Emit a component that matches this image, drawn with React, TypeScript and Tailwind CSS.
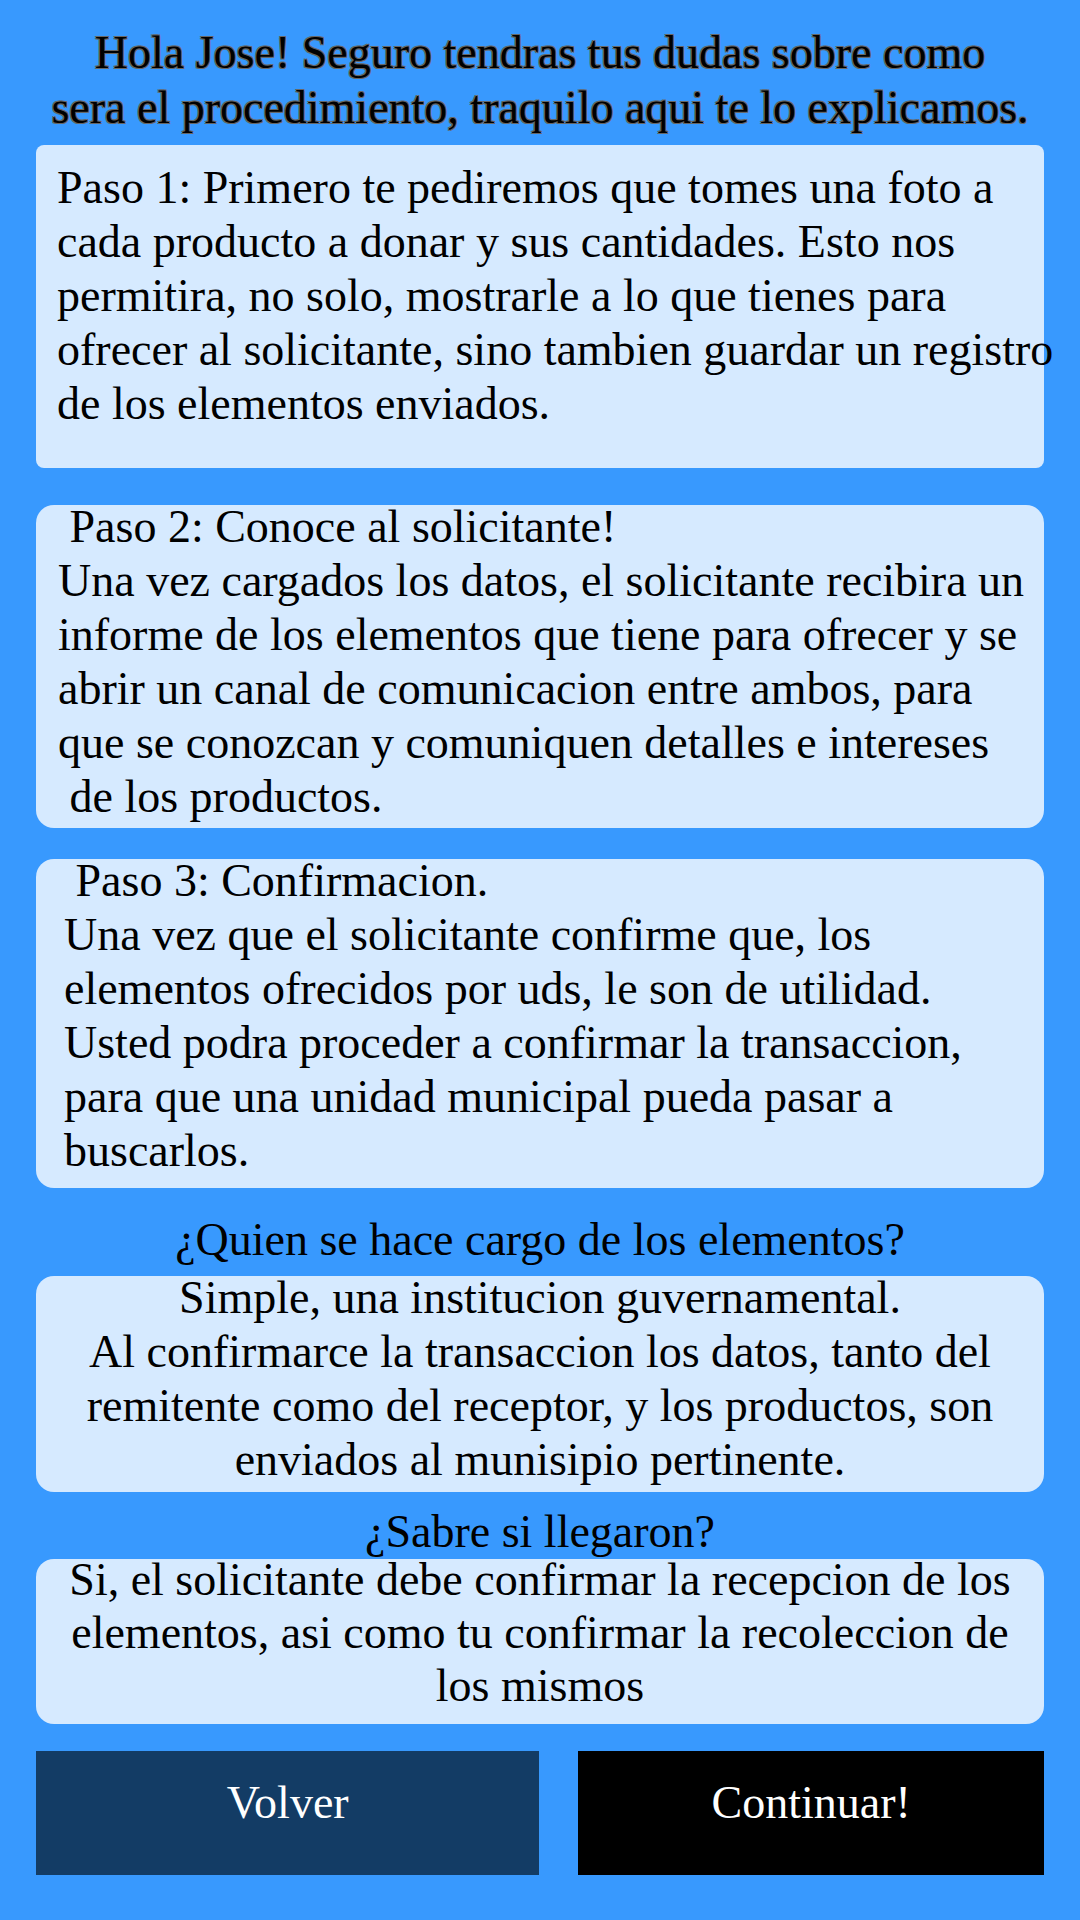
import React from "react";

const serif = "font-['Liberation_Serif','Times_New_Roman',serif]";

const Lines = ({ lines, className }: { lines: string[]; className?: string }) => (
  <div className={className}>
    {lines.map((l, i) => (
      <p key={i} className="whitespace-pre leading-[54px]">
        {l}
      </p>
    ))}
  </div>
);

export default function App() {
  return (
    <div className={`${serif} min-h-[1920px] w-[1080px] bg-[#3899fe] text-[46px] text-black px-[36px] pt-[25px]`}>
      <div className="text-center leading-[55px] [text-shadow:1px_1px_0_#666,-1px_-1px_0_#666,1px_-1px_0_#666,-1px_1px_0_#666]">
        <p>Hola Jose! Seguro tendras tus dudas sobre como</p>
        <p>sera el procedimiento, traquilo aqui te lo explicamos.</p>
      </div>

      <div className="mt-[10px] h-[323px] rounded-[8px] bg-[#d6eaff] pl-[21px] pt-[16px]">
        <Lines
          lines={[
            "Paso 1: Primero te pediremos que tomes una foto a",
            "cada producto a donar y sus cantidades. Esto nos",
            "permitira, no solo, mostrarle a lo que tienes para",
            "ofrecer al solicitante, sino tambien guardar un registro",
            "de los elementos enviados.",
          ]}
        />
      </div>

      <div className="mt-[37px] h-[323px] rounded-[18px] bg-[#d6eaff] pl-[22px]">
        <Lines
          className="-translate-y-[5px]"
          lines={[
            " Paso 2: Conoce al solicitante!",
            "Una vez cargados los datos, el solicitante recibira un",
            "informe de los elementos que tiene para ofrecer y se",
            "abrir un canal de comunicacion entre ambos, para",
            "que se conozcan y comuniquen detalles e intereses",
            " de los productos.",
          ]}
        />
      </div>

      <div className="mt-[31px] h-[329px] rounded-[18px] bg-[#d6eaff] pl-[28px]">
        <Lines
          className="-translate-y-[5px]"
          lines={[
            " Paso 3: Confirmacion.",
            "Una vez que el solicitante confirme que, los",
            "elementos ofrecidos por uds, le son de utilidad.",
            "Usted podra proceder a confirmar la transaccion,",
            "para que una unidad municipal pueda pasar a",
            "buscarlos.",
          ]}
        />
      </div>

      <p className="mt-[25px] text-center leading-[54px]">¿Quien se hace cargo de los elementos?</p>

      <div className="mt-[9px] h-[216px] rounded-[18px] bg-[#d6eaff] text-center">
        <Lines
          className="-translate-y-[5px]"
          lines={[
            "Simple, una institucion guvernamental.",
            "Al confirmarce la transaccion los datos, tanto del",
            "remitente como del receptor, y los productos, son",
            "enviados al munisipio pertinente.",
          ]}
        />
      </div>

      <p className="mt-[13px] text-center leading-[54px]">¿Sabre si llegaron?</p>

      <div className="h-[165px] rounded-[18px] bg-[#d6eaff] text-center">
        <div className="-translate-y-[6px]">
          {[
            "Si, el solicitante debe confirmar la recepcion de los",
            "elementos, asi como tu confirmar la recoleccion de",
            "los mismos",
          ].map((l) => (
            <p key={l} className="whitespace-pre leading-[53px]">
              {l}
            </p>
          ))}
        </div>
      </div>

      <div className="mt-[27px] flex gap-[39px]">
        <button className="h-[124px] w-[504px] bg-[#133c65] pb-[20px] text-white leading-[54px]">Volver</button>
        <button className="h-[124px] w-[466px] bg-black pb-[20px] text-white leading-[54px]">Continuar!</button>
      </div>
    </div>
  );
}
